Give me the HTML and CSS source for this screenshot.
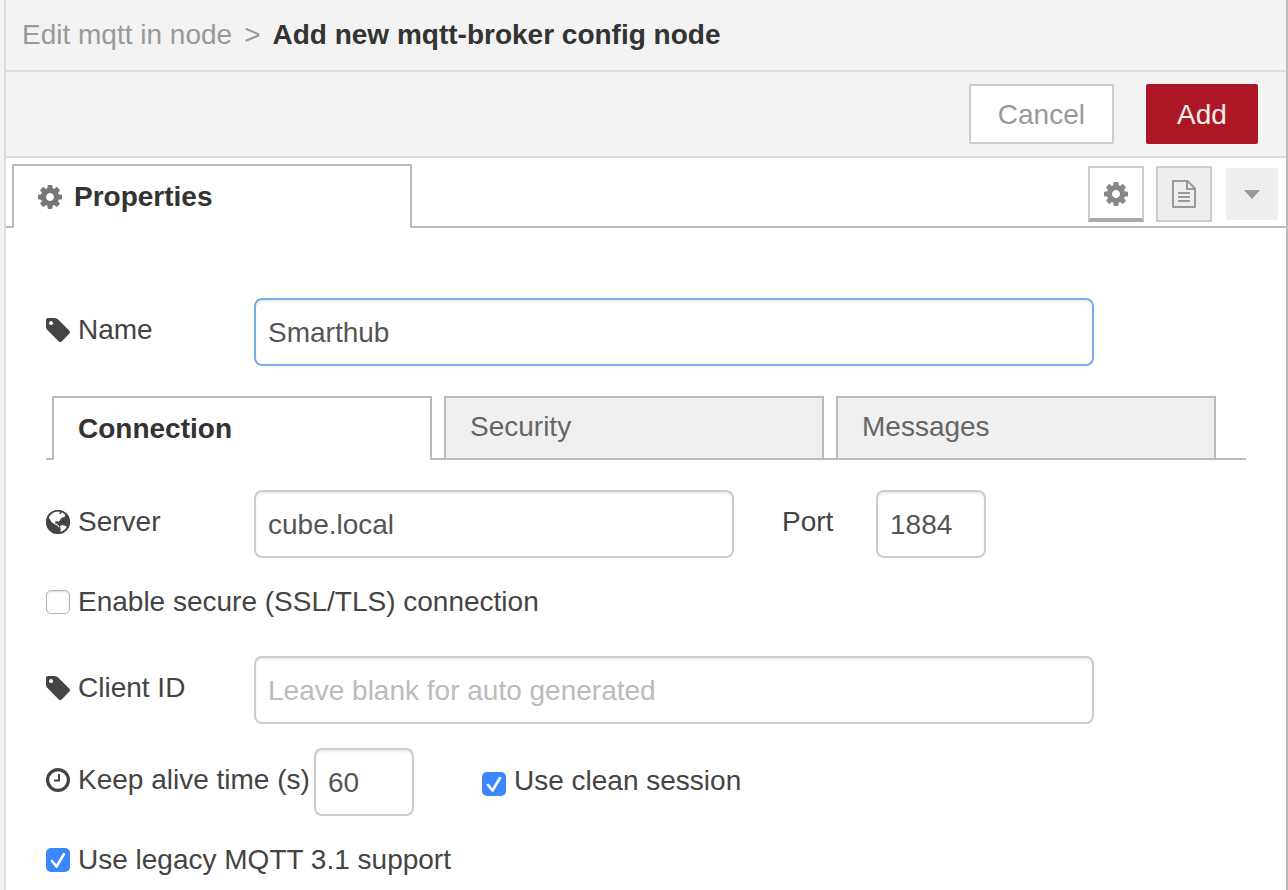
FILE: index.html
```html
<!DOCTYPE html>
<html lang="en">
<head>
    <meta charset="UTF-8">
    <title>Add new mqtt-broker config node</title>
    <link rel="stylesheet" href="styles.css">
</head>
<body>

    <!-- shared icons -->
    <svg class="sprite" width="0" height="0" aria-hidden="true">
        <symbol id="cog" viewBox="0 -128 1536 1536">
            <path d="M1024 640q0-106-75-181t-181-75-181 75-75 181 75 181 181 75 181-75 75-181zm512-109v222q0 12-8 23t-20 13l-185 28q-19 54-39 91 35 50 107 138 10 12 10 25t-9 23q-27 37-99 108t-94 71q-12 0-26-9l-138-108q-44 23-91 38-16 136-29 186-7 28-36 28h-222q-14 0-24.500-8.500t-11.500-21.500l-28-184q-49-16-90-37l-141 107q-10 9-25 9-14 0-25-11-126-114-165-168-7-10-7-23 0-12 8-23 15-21 51-66.500t54-70.500q-27-50-41-99l-183-27q-13-2-21-12.500t-8-23.500v-222q0-12 8-23t19-13l186-28q14-46 39-92-40-57-107-138-10-12-10-24 0-10 9-23 26-36 98.500-107.500t94.500-71.500q13 0 26 10l138 107q44-23 91-38 16-136 29-186 7-28 36-28h222q14 0 24.500 8.500t11.500 21.500l28 184q49 16 90 37l142-107q9-9 24-9 13 0 25 10 129 119 165 170 7 8 7 22 0 12-8 23-15 21-51 66.500t-54 70.500q26 50 41 98l183 28q13 2 21 12.500t8 23.500z"/>
        </symbol>
        <symbol id="tag" viewBox="128 128 1515 1515">
            <path d="M576 448q0-53-37.500-90.500t-90.500-37.500-90.500 37.500-37.500 90.500 37.500 90.500 90.500 37.500 90.500-37.500 37.500-90.500zm1067 576q0 53-37 90l-491 492q-39 37-91 37-53 0-90-37l-715-716q-38-37-64.500-101t-26.500-117v-416q0-52 38-90t90-38h416q53 0 117 26.500t102 64.500l715 714q37 39 37 91z"/>
        </symbol>
        <symbol id="globe" viewBox="0 0 24 24">
            <circle cx="12" cy="12" r="12"/>
            <path fill="#fff" d="M2.500 6.500L5.500 3l3.500-1.500 3-.5 2.500.8-1.500 1.700 1.500.8 1.500-2.300 2.500.8 2 2.200-2 .3.500 1.700-2.500.3-2 1.700-.5 1.500-2 1.500-.5-1-2 .5-.5 1.500 1 1 1.500-.5v1.500l1.500.7.5 1.300-1 .5-.5-1.500-2-1-2.500-1.500-2-1.500-1.500-2.500-1-1.500z"/>
            <path fill="#fff" d="M14 16l2.500-1 3 1 1.500 1-1.500 2.500-3.500 2-1.700.3.500-2.300z"/>
            <circle cx="12" cy="12" r="11.200" fill="none" stroke="currentColor" stroke-width="1.600"/>
        </symbol>
        <symbol id="clock" viewBox="0 0 24 24">
            <circle cx="12" cy="12" r="10.400" fill="none" stroke="currentColor" stroke-width="3.200"/>
            <path d="M12 6h2v7.500h-6v-2h4z"/>
        </symbol>
        <symbol id="file" viewBox="0 0 24 28">
            <path d="M1 1h14.500l7.500 7.500v18.500h-22zM15 1v8h8M6 13h12M6 17h12M6 21h12" fill="none" stroke="currentColor" stroke-width="2" stroke-linejoin="round"/>
        </symbol>
    </svg>

    <div class="tray">
        <div class="tray-header">
            <span class="crumb">Edit mqtt in node</span>
            <span class="crumb">&gt;</span>
            <h1>Add new mqtt-broker config node</h1>
        </div>

        <div class="tray-toolbar">
            <button type="button" class="btn">Cancel</button>
            <button type="button" class="btn primary">Add</button>
        </div>

        <div class="tabs editor-tabs">
            <a href="#properties" class="tab active"><svg class="icon"><use href="#cog"/></svg>Properties</a>
            <div class="tab-buttons">
                <button type="button" class="icon-btn selected" aria-label="Properties"><svg class="icon"><use href="#cog"/></svg></button>
                <button type="button" class="icon-btn" aria-label="Description"><svg class="icon file"><use href="#file"/></svg></button>
                <button type="button" class="icon-btn menu" aria-label="More"><span class="caret"></span></button>
            </div>
        </div>

        <form class="form" id="properties">
            <div class="row">
                <label class="name" for="name"><svg class="icon"><use href="#tag"/></svg>Name</label>
                <input type="text" id="name" class="wide current" value="Smarthub">
            </div>

            <div class="tabs form-tabs">
                <a href="#connection" class="tab active">Connection</a>
                <a href="#security" class="tab">Security</a>
                <a href="#messages" class="tab">Messages</a>
            </div>

            <div id="connection">
                <div class="row">
                    <label class="name" for="server"><svg class="icon"><use href="#globe"/></svg>Server</label>
                    <input type="text" id="server" class="medium" value="cube.local">
                    <label class="port" for="port">Port</label>
                    <input type="text" id="port" class="short" value="1884">
                </div>
                <div class="row check tls">
                    <input type="checkbox" id="tls">
                    <label for="tls">Enable secure (SSL/TLS) connection</label>
                </div>
                <div class="row">
                    <label class="name" for="client"><svg class="icon"><use href="#tag"/></svg>Client ID</label>
                    <input type="text" id="client" class="wide" placeholder="Leave blank for auto generated">
                </div>
                <div class="row">
                    <label class="keepalive" for="keepalive"><svg class="icon"><use href="#clock"/></svg>Keep alive time (s)</label>
                    <input type="text" id="keepalive" class="shorter" value="60">
                    <div class="check session">
                        <input type="checkbox" id="clean" checked>
                        <label for="clean">Use clean session</label>
                    </div>
                </div>
                <div class="row check">
                    <input type="checkbox" id="legacy" checked>
                    <label for="legacy">Use legacy MQTT 3.1 support</label>
                </div>
            </div>
        </form>
    </div>

</body>
</html>
```
FILE: styles.css
```css
* {
    box-sizing: border-box;
}
body {
    margin: 0;
    padding-left: 4px;
    background-color: #f3f3f3;
    color: #444;
    font-family: "Liberation Sans", Arial, sans-serif;
    font-size: 28px;
    line-height: 40px;
}
input, button {
    margin: 0;
    font: inherit;
}
a {
    text-decoration: none;
}
.sprite {
    position: absolute;
}
.icon {
    flex: none;
    width: 24px;
    height: 24px;
    fill: currentColor;
}
.tray {
    min-height: 100vh;
    border-left: 2px solid #ddd;
    border-right: 2px solid #bbb;
    background-color: #fff;
}
.tray-header {
    display: flex;
    align-items: center;
    gap: 12px;
    height: 72px;
    padding: 0 16px;
    border-bottom: 2px solid #ddd;
    background-color: #f3f3f3;
}
.tray-header h1 {
    margin: 0;
    color: #333;
    font-size: 28px;
    font-weight: bold;
}
.crumb {
    color: #999;
}
.tray-toolbar {
    display: flex;
    justify-content: flex-end;
    gap: 32px;
    padding: 12px 28px;
    border-bottom: 2px solid #ddd;
    background-color: #f3f3f3;
}
.btn {
    min-width: 112px;
    height: 60px;
    padding: 2px 27px 0;
    border: 2px solid #ccc;
    border-radius: 2px;
    background-color: #fff;
    color: #999;
}
.btn.primary {
    border-color: #ad1625;
    background-color: #ad1625;
    color: #eee;
}

/* tabs */
.tabs {
    display: flex;
    height: 64px;
    border-bottom: 2px solid #bbb;
}
.tab {
    display: flex;
    align-items: center;
    padding: 0 24px 2px;
    border: 2px solid #bbb;
    border-bottom: 0;
    background-color: #f0f0f0;
    color: #666;
}
.tab.active {
    margin-bottom: -2px;
    padding-bottom: 0;
    background-color: #fff;
    color: #333;
    font-weight: bold;
}
.editor-tabs {
    height: 70px;
    padding: 6px 8px 0 6px;
}
.editor-tabs .tab {
    flex: 0 1 400px;
}
.editor-tabs .icon {
    color: #777;
}
.editor-tabs .tab .icon {
    margin-right: 12px;
}
.tab-buttons {
    display: flex;
    align-items: center;
    gap: 12px;
    margin-left: auto;
    padding-bottom: 2px;
}
.icon-btn {
    display: flex;
    align-items: center;
    justify-content: center;
    width: 56px;
    height: 56px;
    padding: 0;
    border: 2px solid #ccc;
    background-color: #eee;
}
.icon-btn.selected {
    padding-top: 2px;
    border-bottom: 4px solid #aaa;
    background-color: #fff;
}
.icon-btn .icon {
    color: #888;
}
.icon-btn .file {
    height: 28px;
    color: #999;
}
.icon-btn.menu {
    width: 52px;
    height: 52px;
    margin-left: 2px;
    border: 0;
}
.caret {
    border: 8px solid transparent;
    border-top: 9px solid #999;
    border-bottom: 0;
}

/* form */
.form {
    padding: 70px 40px 0;
}
.form-tabs {
    gap: 12px;
    margin: 30px 0;
    padding: 0 30px 0 6px;
}
.form-tabs .tab {
    flex: 1;
}
.row {
    display: flex;
    align-items: center;
    margin-bottom: 24px;
}
.row:last-child {
    margin-bottom: 0;
}
.row.tls {
    margin-bottom: 34px;
}
label {
    display: flex;
    align-items: center;
    white-space: nowrap;
}
label .icon {
    margin-right: 8px;
}
.name, .keepalive, .port {
    padding-bottom: 4px;
}
.name {
    width: 208px;
}
.keepalive {
    width: 268px;
}
.port {
    width: 142px;
    padding-left: 48px;
}
input[type="text"] {
    height: 68px;
    padding: 2px 12px 0;
    border: 2px solid #ccc;
    border-radius: 8px;
    background-color: #fff;
    box-shadow: inset 0 2px 2px rgba(0, 0, 0, 0.075);
    color: #555;
    outline: 0;
}
input[type="text"].current,
input[type="text"]:focus {
    border-color: #78aaec;
}
input::placeholder {
    color: #bbb;
}
input.wide {
    width: 70%;
}
input.medium {
    width: 40%;
}
input.short {
    width: 110px;
}
input.shorter {
    width: 100px;
}
.check {
    display: flex;
    align-items: center;
    gap: 8px;
}
.session {
    margin-left: 68px;
}
.session label {
    padding-bottom: 2px;
}
.session input {
    margin-top: 4px;
}
input[type="checkbox"] {
    width: 24px;
    height: 24px;
    border: 1px solid #b4b4b4;
    border-radius: 5px;
    background-color: #fff;
    box-shadow: inset 0 1px 2px rgba(0, 0, 0, 0.15);
    appearance: none;
}
input[type="checkbox"]:checked {
    border: 0;
    background: #3b87fd url("data:image/svg+xml,%3Csvg xmlns='http://www.w3.org/2000/svg' viewBox='0 0 24 24'%3E%3Cpath d='M6 13l4.500 5.500L18 6' fill='none' stroke='white' stroke-width='2.600' stroke-linecap='round' stroke-linejoin='round'/%3E%3C/svg%3E") center / 24px 24px;
    box-shadow: none;
}
```
